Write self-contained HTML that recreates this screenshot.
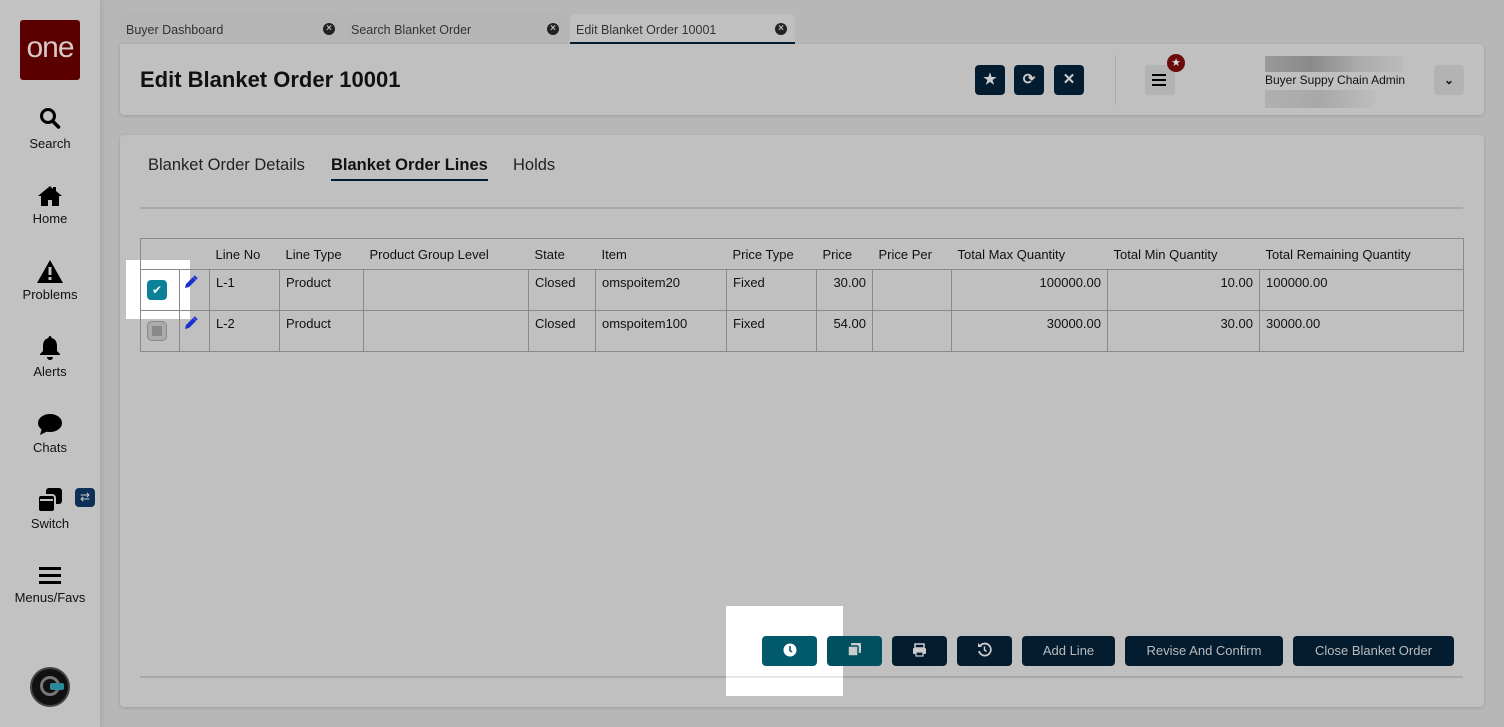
<!DOCTYPE html>
<html><head><meta charset="utf-8"><style>
*{box-sizing:border-box;margin:0;padding:0}
body{width:1504px;height:727px;background:#b7b7b7;font-family:"Liberation Sans",sans-serif;color:#111;position:relative;overflow:hidden}
.abs{position:absolute}
.side{left:0;top:0;width:100px;height:727px;background:#c2c2c2;box-shadow:2px 0 4px rgba(0,0,0,.08)}
.logo{left:20px;top:20px;width:60px;height:60px;background:#5a0000;border-radius:3px;color:#d8c8c8;font-size:30px;text-align:center;line-height:56px;letter-spacing:-1px;font-weight:100}
.nav{width:100px;text-align:center;font-size:13px;color:#111}
.tab{top:14px;height:30px;background:#b5b5b5;border-radius:5px 5px 0 0;font-size:12.5px;color:#333;padding:9px 6px}
.tab .x{position:absolute;right:8px;top:9px;width:12px;height:12px;border-radius:50%;background:#222;color:#bbb;font-size:10px;line-height:12px;text-align:center;font-weight:bold}
.card{background:#c0c0c0;border-radius:4px;box-shadow:0 1px 3px rgba(0,0,0,.15)}
.ib{width:30px;height:30px;background:#041c30;border-radius:4px;color:#ccc;text-align:center;line-height:30px;font-size:15px;font-weight:bold}
table{border-collapse:collapse;font-size:13px}
td{border:1px solid #8a8a8a;vertical-align:top;padding:5px 6px;height:41px}
th{font-weight:normal;text-align:left;padding:0 6px;height:31px;border-top:1px solid #8a8a8a;border-bottom:1px solid #8a8a8a}
th:first-child{border-left:1px solid #8a8a8a}th:last-child{border-right:1px solid #8a8a8a}
.r{text-align:right}
.btn{top:636px;height:30px;background:#041c30;border-radius:4px;color:#bbb;font-size:13px;text-align:center;line-height:30px}
</style></head><body>
<div class="abs side"></div>
<div class="abs logo">one</div>
<div class="abs nav" style="top:107px"><svg width="22" height="24" viewBox="0 0 22 24"><circle cx="9" cy="9" r="6.5" fill="none" stroke="#000" stroke-width="3"/><path d="M13.5 14l6 6" stroke="#000" stroke-width="3.5" stroke-linecap="round"/></svg><div style="margin-top:2px">Search</div></div>
<div class="abs nav" style="top:184px"><svg width="26" height="24" viewBox="0 0 26 24"><path d="M13 2L1 12h3v10h7v-6h4v6h7V12h3L19 7V3h-3v2z" fill="#000"/></svg><div>Home</div></div>
<div class="abs nav" style="top:259px"><svg width="28" height="25" viewBox="0 0 28 25"><path d="M14 1L27 24H1z" fill="#000"/><rect x="12.5" y="8" width="3" height="8" fill="#c2c2c2"/><rect x="12.5" y="18" width="3" height="3" fill="#c2c2c2"/></svg><div>Problems</div></div>
<div class="abs nav" style="top:335px"><svg width="24" height="26" viewBox="0 0 24 26"><path d="M12 1c1 0 1.5 1 1.5 2 4 1 5.5 4 5.5 8v5l3 3v1H2v-1l3-3v-5c0-4 1.5-7 5.5-8 0-1 .5-2 1.5-2z" fill="#000"/><path d="M9 22h6a3 3 0 0 1-6 0z" fill="#000"/></svg><div>Alerts</div></div>
<div class="abs nav" style="top:413px"><svg width="26" height="24" viewBox="0 0 26 24"><ellipse cx="13" cy="10" rx="12" ry="9" fill="#000"/><path d="M5 15l-2 7 8-4z" fill="#000"/></svg><div>Chats</div></div>
<div class="abs nav" style="top:487px"><svg width="26" height="26" viewBox="0 0 26 26"><rect x="9" y="1" width="16" height="16" rx="3" fill="#000"/><rect x="1" y="8" width="17" height="17" rx="3" fill="#000" stroke="#c2c2c2" stroke-width="2"/><rect x="3" y="12" width="13" height="2" fill="#c2c2c2"/></svg><div>Switch</div></div>
<div class="abs" style="left:75px;top:488px;width:20px;height:19px;background:#0c2f56;border-radius:4px;color:#ccc;font-size:12px;text-align:center;line-height:19px">⇄</div>
<div class="abs nav" style="top:565px"><svg width="24" height="22" viewBox="0 0 24 22"><rect x="1" y="2" width="22" height="3" fill="#000"/><rect x="1" y="9" width="22" height="3" fill="#000"/><rect x="1" y="16" width="22" height="3" fill="#000"/></svg><div>Menus/Favs</div></div>
<div class="abs" style="left:30px;top:667px;width:40px;height:40px;border-radius:50%;background:#111;border:2px solid #444"><div style="position:absolute;left:8px;top:7px;width:20px;height:20px;border-radius:50%;border:3px solid #777"></div><div style="position:absolute;left:18px;top:14px;width:14px;height:7px;background:#2b8a9a;border-radius:2px"></div></div>

<div class="abs tab" style="left:120px;width:223px">Buyer Dashboard<span class="x">×</span></div>
<div class="abs tab" style="left:345px;width:222px">Search Blanket Order<span class="x">×</span></div>
<div class="abs tab" style="left:570px;width:225px;background:#c0c0c0;border-bottom:2px solid #041c30">Edit Blanket Order 10001<span class="x">×</span></div>

<div class="abs card" style="left:120px;top:44px;width:1364px;height:71px;border-radius:0 4px 4px 4px"></div>
<div class="abs" style="left:140px;top:67px;font-size:22px;font-weight:bold">Edit Blanket Order 10001</div>
<div class="abs ib" style="left:975px;top:65px">★</div>
<div class="abs ib" style="left:1014px;top:65px">⟳</div>
<div class="abs ib" style="left:1054px;top:65px">✕</div>
<div class="abs" style="left:1115px;top:55px;width:1px;height:50px;background:#aaa"></div>
<div class="abs" style="left:1145px;top:65px;width:30px;height:30px;background:#b3b3b3;border-radius:4px"><div style="position:absolute;left:7px;top:9px;width:14px;height:2px;background:#000;box-shadow:0 5px 0 #000,0 10px 0 #000"></div></div>
<div class="abs" style="left:1167px;top:54px;width:18px;height:18px;border-radius:50%;background:#6a0a0a;color:#ddd;font-size:11px;text-align:center;line-height:18px">★</div>
<div class="abs" style="left:1265px;top:56px;width:138px;height:16px;background:linear-gradient(90deg,#999,#8a8a8a,#aaa,#bbb)"></div>
<div class="abs" style="left:1265px;top:73px;font-size:12px">Buyer Suppy Chain Admin</div>
<div class="abs" style="left:1265px;top:90px;width:110px;height:18px;background:linear-gradient(90deg,#b0b0b0,#a8a8a8,#bdbdbd)"></div>
<div class="abs" style="left:1434px;top:65px;width:30px;height:30px;background:#b3b3b3;border-radius:4px;text-align:center;line-height:30px;font-size:12px;font-weight:bold">⌄</div>

<div class="abs card" style="left:120px;top:135px;width:1364px;height:572px"></div>
<div class="abs" style="left:148px;top:156px;font-size:16.5px;color:#222">Blanket Order Details</div>
<div class="abs" style="left:331px;top:156px;font-size:16.5px;font-weight:bold;padding-bottom:4px;border-bottom:2px solid #041c30">Blanket Order Lines</div>
<div class="abs" style="left:513px;top:156px;font-size:16.5px;color:#222">Holds</div>
<div class="abs" style="left:140px;top:207px;width:1323px;height:2px;background:#a8a8a8"></div>

<div class="abs" style="left:126px;top:260px;width:64px;height:59px;background:#fff"></div>
<table class="abs" style="left:140px;top:238px;width:1324px">
<tr><th style="width:39px"></th><th style="width:30px"></th><th style="width:70px">Line No</th><th style="width:84px">Line Type</th><th style="width:165px">Product Group Level</th><th style="width:67px">State</th><th style="width:131px">Item</th><th style="width:90px">Price Type</th><th style="width:56px">Price</th><th style="width:79px">Price Per</th><th style="width:156px">Total Max Quantity</th><th style="width:152px">Total Min Quantity</th><th>Total Remaining Quantity</th></tr>
<tr><td style="padding:0"><div style="margin:10px 0 0 6px;width:20px;height:20px;border-radius:4px;background:#0b8199;color:#fff;font-size:12px;text-align:center;line-height:20px">✔</div></td><td style="padding:5px 4px"><svg width="14" height="14" viewBox="0 0 14 14"><path d="M1 13l1-4 7-7 3 3-7 7z" fill="#1a2fd0"/><path d="M10 1l3 3" stroke="#1a2fd0" stroke-width="2"/></svg></td><td>L-1</td><td>Product</td><td></td><td>Closed</td><td>omspoitem20</td><td>Fixed</td><td class="r">30.00</td><td></td><td class="r">100000.00</td><td class="r">10.00</td><td>100000.00</td></tr>
<tr><td style="padding:0"><div style="margin:10px 0 0 6px;width:20px;height:20px;border-radius:5px;border:1px solid #888;background:#ababab;position:relative"><div style="position:absolute;left:4px;top:4px;width:10px;height:10px;background:#888"></div></div></td><td style="padding:5px 4px"><svg width="14" height="14" viewBox="0 0 14 14"><path d="M1 13l1-4 7-7 3 3-7 7z" fill="#1a2fd0"/><path d="M10 1l3 3" stroke="#1a2fd0" stroke-width="2"/></svg></td><td>L-2</td><td>Product</td><td></td><td>Closed</td><td>omspoitem100</td><td>Fixed</td><td class="r">54.00</td><td></td><td class="r">30000.00</td><td class="r">30.00</td><td>30000.00</td></tr>
</table>

<div class="abs" style="left:726px;top:606px;width:117px;height:90px;background:#fff"></div>
<div class="abs" style="left:140px;top:676px;width:1323px;height:2px;background:#a8a8a8"></div>
<div class="abs" style="left:726px;top:676px;width:117px;height:2px;background:#e8e8e8"></div>
<div class="abs btn" style="left:762px;width:55px;background:#005a6c"><svg width="14" height="14" viewBox="0 0 14 14" style="vertical-align:-2px"><circle cx="7" cy="7" r="6.5" fill="#fff"/><path d="M7 3v4.5l2 1.5" stroke="#005a6c" stroke-width="1.6" fill="none"/></svg></div>
<div class="abs btn" style="left:827px;width:55px;background:#00505f"><svg width="15" height="15" viewBox="0 0 15 15" style="vertical-align:-2px"><rect x="4" y="1" width="10" height="10" rx="1" fill="#ccc"/><rect x="1" y="4" width="10" height="10" rx="1" fill="#ccc" stroke="#00505f" stroke-width="1.5"/></svg></div>
<div class="abs btn" style="left:892px;width:55px"><svg width="15" height="14" viewBox="0 0 15 14" style="vertical-align:-2px"><rect x="3" y="1" width="9" height="4" fill="none" stroke="#ccc" stroke-width="1.5"/><rect x="1" y="5" width="13" height="6" rx="1" fill="#ccc"/><rect x="4" y="9" width="7" height="4" fill="#041c30" stroke="#ccc" stroke-width="1.2"/></svg></div>
<div class="abs btn" style="left:957px;width:55px"><svg width="15" height="15" viewBox="0 0 15 15" style="vertical-align:-2px"><path d="M3 4a6 6 0 1 1-1 5" fill="none" stroke="#ccc" stroke-width="1.8"/><path d="M1 1v4h4z" fill="#ccc"/><path d="M7.5 4.5v3.5l2 1.5" fill="none" stroke="#ccc" stroke-width="1.5"/></svg></div>
<div class="abs btn" style="left:1022px;width:93px">Add Line</div>
<div class="abs btn" style="left:1125px;width:158px">Revise And Confirm</div>
<div class="abs btn" style="left:1293px;width:161px">Close Blanket Order</div>
</body></html>
